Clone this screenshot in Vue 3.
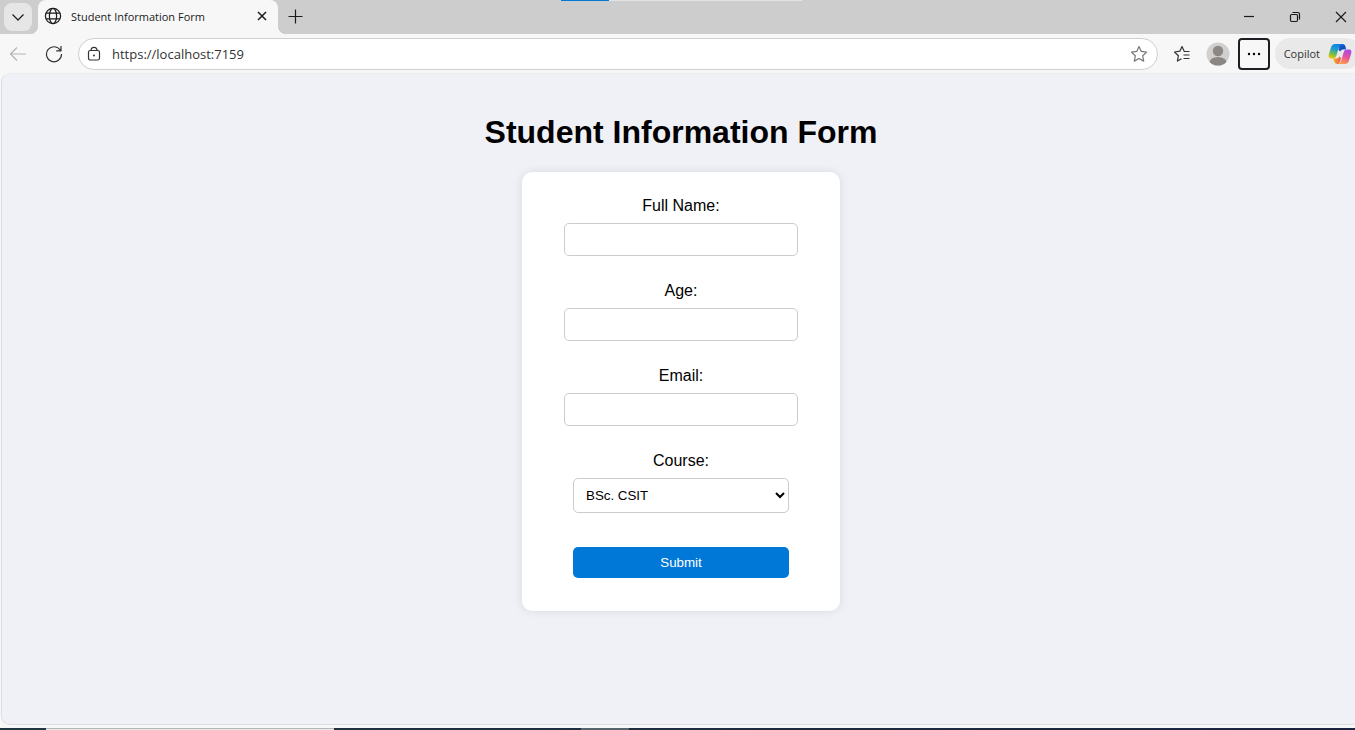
<script setup>
import { ref } from 'vue'

const url = ref('https://localhost:7159')
const fields = [
  { id: 'full-name', label: 'Full Name:', type: 'text' },
  { id: 'age', label: 'Age:', type: 'text' },
  { id: 'email', label: 'Email:', type: 'email' }
]
const values = ref({ 'full-name': '', age: '', email: '' })
const course = ref('BSc. CSIT')
</script>

<template>
  <div class="window">
    <header class="tabstrip">
      <button class="tab-menu" aria-label="Tab actions">
        <svg width="14" height="14" viewBox="0 0 14 14"><path d="M1.500 4.500 7 10l5.500-5.500" /></svg>
      </button>
      <div class="tab">
        <svg class="globe" width="18" height="18" viewBox="0 0 18 18">
          <circle cx="9" cy="9" r="7.600" /><ellipse cx="9" cy="9" rx="3.600" ry="7.600" /><path d="M2 6.200h14M2 11.800h14" />
        </svg>
        <span class="tab-title">Student Information Form</span>
        <button class="tab-close" aria-label="Close tab">
          <svg width="10" height="10" viewBox="0 0 10 10"><path d="m1 1 8 8M9 1 1 9" /></svg>
        </button>
      </div>
      <button class="new-tab" aria-label="New tab">
        <svg width="15" height="15" viewBox="0 0 15 15"><path d="M7.500 .5v14M.5 7.500h14" /></svg>
      </button>
      <div class="load-bar"><div class="load-done"></div></div>
      <div class="window-controls">
        <button aria-label="Minimize"><svg width="12" height="12" viewBox="0 0 12 12"><path d="M1 5.500h10" /></svg></button>
        <button aria-label="Restore">
          <svg width="12" height="12" viewBox="0 0 12 12"><rect x="1.500" y="3.500" width="7" height="7" rx="1.200" /><path d="M3.500 1.500h5.200a1.800 1.800 0 0 1 1.800 1.800v5.200" /></svg>
        </button>
        <button aria-label="Close"><svg width="12" height="12" viewBox="0 0 12 12"><path d="m1 1 10 10M11 1 1 11" /></svg></button>
      </div>
    </header>

    <nav class="toolbar">
      <button class="back" aria-label="Back" disabled>
        <svg width="18" height="16" viewBox="0 0 18 16"><path d="M17 8H1.500M8 1.500 1.500 8 8 14.500" /></svg>
      </button>
      <button class="reload" aria-label="Refresh">
        <svg width="18" height="18" viewBox="0 0 18 18"><path d="M15.500 5.500A7.500 7.500 0 1 0 16.500 9M16 1v4.800h-4.800" /></svg>
      </button>
      <div class="address">
        <svg class="lock" width="14" height="16" viewBox="0 0 14 16"><rect x="1.500" y="4.500" width="11" height="9.500" rx="1.800" /><path d="M4 4.500a3 3.200 0 0 1 6 0" /><circle cx="7" cy="9.500" r="1" class="dot" /></svg>
        <input v-model="url" class="url" type="text" aria-label="Address" />
        <button class="favorite" aria-label="Add to favorites">
          <svg width="18" height="18" viewBox="0 0 18 18"><path d="m9 1.500 2.300 4.900 5.300.7-3.900 3.700 1 5.300L9 13.500l-4.700 2.600 1-5.300-3.900-3.700 5.300-.7z" /></svg>
        </button>
      </div>
      <button class="favorites" aria-label="Favorites">
        <svg width="18" height="18" viewBox="0 0 18 18"><path d="M16.500 6.500h-5.200L9 1.500 6.800 6.200l-5.300.8 3.900 3.700-1 5.400L8.500 13.700M10.500 10h6M10.500 13.500h6" /></svg>
      </button>
      <button class="profile" aria-label="Profile">
        <svg width="24" height="24" viewBox="0 0 24 24">
          <defs><clipPath id="avatar-clip"><circle cx="12" cy="12" r="11.500" /></clipPath></defs>
          <circle cx="12" cy="12" r="11.500" fill="#d2d0ce" /><circle cx="12" cy="9" r="5.200" fill="#8a8785" />
          <ellipse cx="12" cy="20.500" rx="8.500" ry="5.500" fill="#8a8785" clip-path="url(#avatar-clip)" />
        </svg>
      </button>
      <button class="more" aria-label="Settings and more">
        <svg width="14" height="4" viewBox="0 0 14 4"><circle cx="2" cy="2" r="1.200" /><circle cx="7" cy="2" r="1.200" /><circle cx="12" cy="2" r="1.200" /></svg>
      </button>
      <button class="copilot">
        <span>Copilot</span>
        <svg width="24" height="22" viewBox="0 0 24 22">
          <defs>
            <linearGradient id="cp-left" x1="0.600" y1="0" x2="0.300" y2="1"><stop offset="0" stop-color="#0a84e8" /><stop offset=".4" stop-color="#249fc4" /><stop offset=".7" stop-color="#75bd45" /><stop offset="1" stop-color="#f2c500" /></linearGradient>
            <linearGradient id="cp-right" x1="0.700" y1="0" x2="0.400" y2="1"><stop offset="0" stop-color="#a64bec" /><stop offset=".5" stop-color="#e5519f" /><stop offset="1" stop-color="#ff9a48" /></linearGradient>
            <linearGradient id="cp-top" x1="0" y1="0" x2="1" y2="1"><stop offset="0" stop-color="#1878e5" /><stop offset=".6" stop-color="#1447bd" /><stop offset="1" stop-color="#2686ee" /></linearGradient>
            <linearGradient id="cp-base" x1="0" y1="0" x2="1" y2="0"><stop offset="0" stop-color="#f1bd16" /><stop offset="1" stop-color="#f2525f" /></linearGradient>
          </defs>
          <path fill="url(#cp-top)" d="M11 1h3.500c1.700 0 2.500.9 3 2.700l.8 2.800h-2.800c-1.600 0-2.600.6-3.200 2L10.500 7z" />
          <path fill="url(#cp-base)" d="M5 15.500h3.500c1.500 0 2.400-.8 3-2.200L13 15l-1 4-1.500 2H9.200c-1.700 0-2.400-.9-2.900-2.500z" />
          <path fill="url(#cp-left)" d="M7.200 1h6.300c-1.600.4-2.200 1.700-2.700 3.500L8.500 12.200c-.7 2.300-1.700 3.300-3.800 3.300H3c-2.200 0-2.800-1.600-2.200-3.900l2-6.500C3.600 2.300 4.700 1 7.200 1z" />
          <path fill="url(#cp-right)" d="M16.800 21h-6.300c1.600-.4 2.200-1.700 2.700-3.500l2.300-7.700c.7-2.300 1.700-3.300 3.800-3.300H21c2.200 0 2.800 1.600 2.200 3.900l-2 6.500c-.8 2.800-1.900 4.100-4.400 4.100z" />
        </svg>
      </button>
    </nav>

    <main class="page">
      <h1>Student Information Form</h1>
      <form class="card" @submit.prevent>
        <div v-for="field in fields" :key="field.id" class="field">
          <label :for="field.id">{{ field.label }}</label>
          <input :id="field.id" v-model="values[field.id]" :type="field.type" />
        </div>
        <div class="field">
          <label for="course">Course:</label>
          <select id="course" v-model="course">
            <option>BSc. CSIT</option>
          </select>
        </div>
        <button class="submit" type="submit">Submit</button>
      </form>
    </main>

    <footer class="taskbar">
      <div class="task-search"></div>
      <div class="task-active"></div>
    </footer>
  </div>
</template>

<style>
body {
  margin: 0;
}
</style>

<style scoped>
.window {
  display: flex;
  flex-direction: column;
  min-height: 100vh;
  overflow: hidden;
  background: #f7f7f7;
  font-family: "Open Sans", "Noto Sans", sans-serif;
  font-size: 11px;
  color: #1b1b1b;
}
button {
  display: flex;
  align-items: center;
  justify-content: center;
  flex-shrink: 0;
  padding: 0;
  border: 0;
  background: none;
  color: inherit;
}
svg {
  display: block;
  flex-shrink: 0;
}
.tabstrip svg,
.back svg,
.reload svg,
.address svg,
.favorites svg {
  fill: none;
  stroke: currentColor;
  stroke-width: 1.2;
  stroke-linejoin: round;
}
.tabstrip {
  position: relative;
  display: flex;
  height: 34px;
  background: #cdcdcd;
}
.tab-menu {
  width: 28px;
  height: 28px;
  margin: 3px 6px 0 4px;
  border-radius: 8px;
  background: #e6e6e6;
}
.tab {
  position: relative;
  display: flex;
  align-items: center;
  box-sizing: border-box;
  width: 240px;
  height: 34px;
  padding: 0 8px 2px 6px;
  border-radius: 8px 8px 0 0;
  background: #f7f7f7;
}
.tab::before,
.tab::after {
  content: "";
  position: absolute;
  bottom: 0;
  width: 8px;
  height: 8px;
}
.tab::before {
  right: 100%;
  background: radial-gradient(circle at 0 0, #cdcdcd 8px, #f7f7f7 8px);
}
.tab::after {
  left: 100%;
  background: radial-gradient(circle at 100% 0, #cdcdcd 8px, #f7f7f7 8px);
}
.tab-title {
  flex: 1;
  margin-left: 9px;
  white-space: nowrap;
}
.tab-close {
  width: 16px;
  height: 16px;
}
.tab .tab-close svg {
  stroke-width: 1.5;
}
.new-tab {
  width: 34px;
  height: 32px;
}
.load-bar {
  position: absolute;
  top: 0;
  left: 561px;
  width: 241px;
  height: 1px;
  background: #e3e3e3;
}
.load-done {
  width: 20%;
  height: 1px;
  background: #0078d4;
}
.window-controls {
  display: flex;
  gap: 34px;
  height: 34px;
  margin-left: auto;
  padding-right: 8px;
}
.toolbar {
  display: flex;
  align-items: center;
  height: 39px;
  color: #333;
}
.back {
  width: 18px;
  margin-left: 9px;
  color: #b5b5b5;
}
.reload {
  width: 18px;
  margin: 0 15px 0 18px;
}
.address {
  display: flex;
  flex: 1;
  align-items: center;
  box-sizing: border-box;
  min-width: 0;
  height: 32px;
  padding: 0 9px 0 8px;
  border: 1px solid #cfcfcf;
  border-radius: 16px;
  background: #fff;
}
.lock .dot {
  fill: currentColor;
  stroke: none;
}
.url {
  flex: 1;
  min-width: 0;
  margin-left: 11px;
  padding: 0;
  border: 0;
  outline: 0;
  background: none;
  font-family: inherit;
  font-size: 13px;
  color: #333;
}
.favorite {
  color: #777;
}
.favorites {
  margin-left: 15px;
}
.profile {
  margin-left: 15px;
}
.more {
  box-sizing: border-box;
  width: 32px;
  height: 32px;
  margin: 0 5px 0 8px;
  border: 2px solid #1d1d23;
  border-radius: 4px;
}
.copilot {
  gap: 8px;
  height: 31px;
  margin-right: -6px;
  padding: 0 9px;
  border-radius: 16px;
  background: #e9e9e9;
  font-family: inherit;
  font-size: 11px;
}
.page {
  display: flex;
  flex: 1;
  flex-direction: column;
  align-items: center;
  margin-left: 1px;
  margin-right: -6px;
  padding: 40px 0;
  border: 1px solid #dedee0;
  border-top-color: #ececee;
  border-radius: 9px;
  background: #f0f1f6;
  font-family: "Liberation Sans", Arial, sans-serif;
  font-size: 16px;
  color: #000;
}
h1 {
  margin: 0 0 22px;
  font-size: 32px;
  line-height: 36px;
}
.card {
  display: flex;
  flex-direction: column;
  align-items: center;
  box-sizing: border-box;
  width: 318px;
  padding: 24px 0 33px;
  border-radius: 10px;
  background: #fff;
  box-shadow: 0 0 10px rgba(0, 0, 0, 0.1);
}
.field {
  display: flex;
  flex-direction: column;
  align-items: center;
  gap: 7px;
  margin-bottom: 25px;
}
label {
  line-height: 20px;
}
.field input,
select {
  box-sizing: border-box;
  padding: 8px;
  border: 1px solid #ccc;
  border-radius: 5px;
  background: #fff;
  font-family: inherit;
  color: #000;
}
.field input {
  width: 234px;
  height: 33px;
}
select {
  width: 216px;
  height: 35px;
}
.submit {
  width: 216px;
  height: 31px;
  margin-top: 9px;
  border-radius: 5px;
  background: #0078d7;
  font-family: inherit;
  color: #fff;
}
.taskbar {
  display: flex;
  height: 2px;
  margin-top: 3px;
  padding-left: 46px;
  background: linear-gradient(90deg, #203640, #1b2440);
}
.task-search {
  width: 288px;
  background: #e8e8e8;
  border-top: 1px solid #b5b5b5;
  box-sizing: border-box;
}
.task-active {
  width: 48px;
  margin-left: 247px;
  background: #56646b;
}
</style>
